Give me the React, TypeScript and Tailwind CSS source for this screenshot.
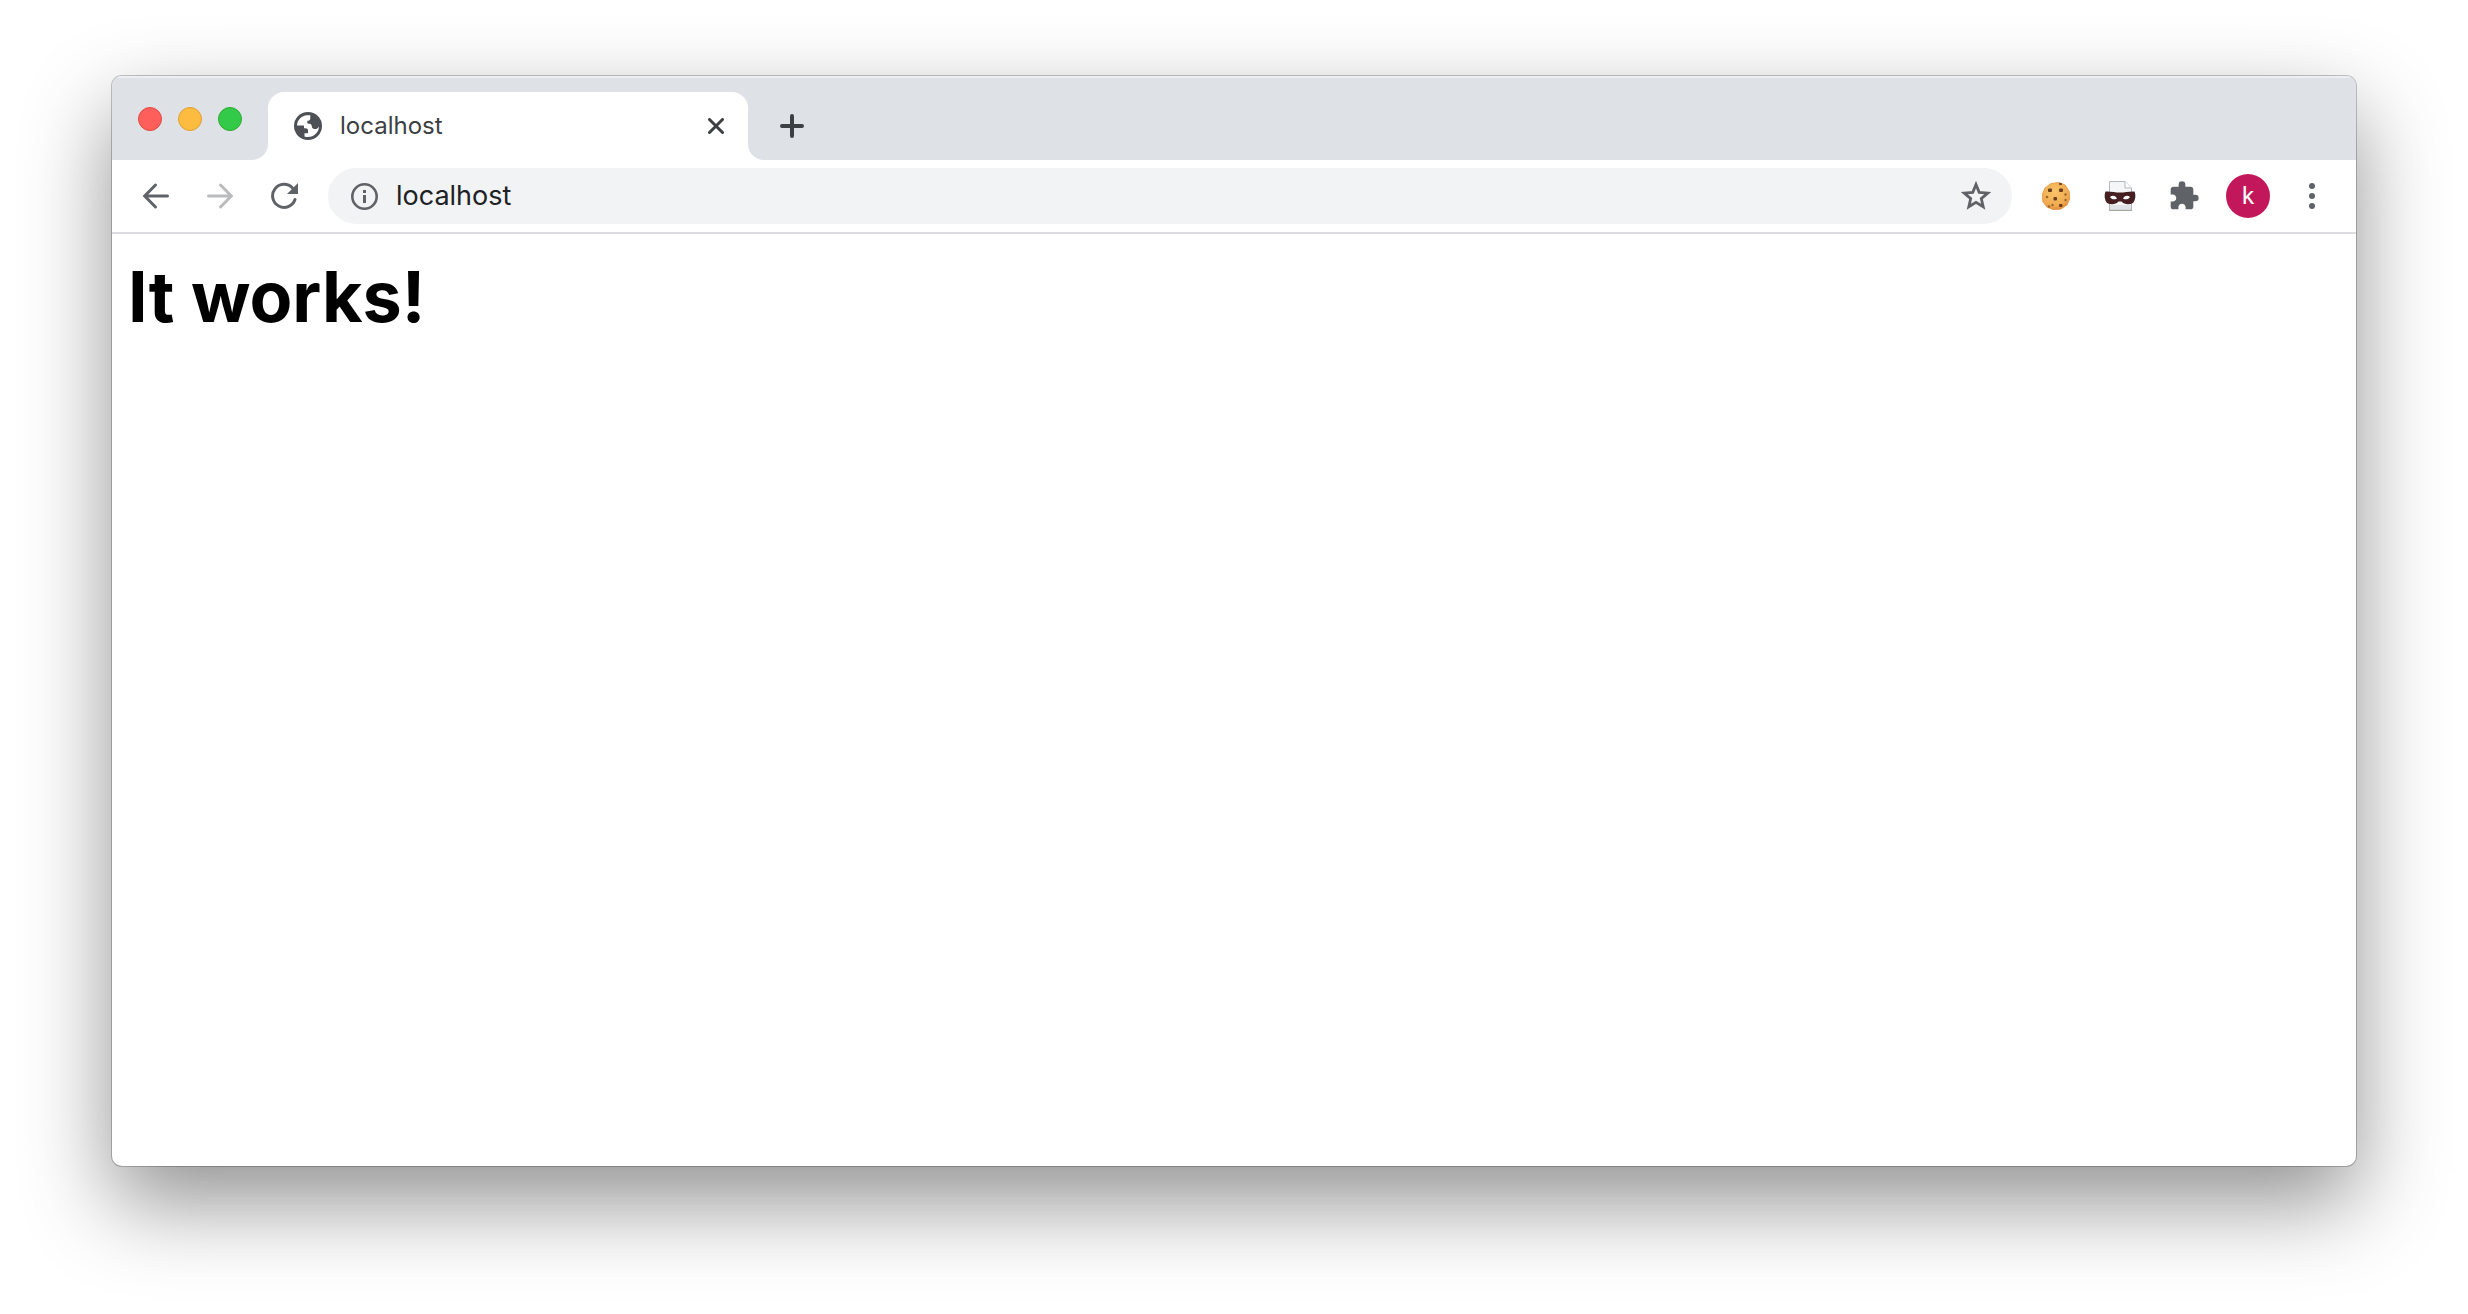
import type { ReactNode } from "react";
import { MdExtension } from "react-icons/md";

interface IconButtonProps {
  label: string;
  children: ReactNode;
}

function IconButton({ label, children }: IconButtonProps) {
  return (
    <button
      type="button"
      aria-label={label}
      className="flex h-14 w-14 shrink-0 items-center justify-center rounded-full text-[#5f6368]"
    >
      {children}
    </button>
  );
}

function GlobeIcon() {
  return (
    <svg viewBox="0 0 28 28" className="h-7 w-7 shrink-0" aria-hidden="true">
      <circle cx="14" cy="14" r="14" fill="#4d5156" />
      <path
        d="M3 13.5C3.200 8.500 7 4 12.300 3.300H16.300V6.500C16.300 8 15 8.800 13.300 8.800V10.800C13.300 11.500 14.500 11.800 15.500 11.800C17.200 11.800 17.800 13 18 15.500C19.500 17.500 22.500 17.500 24.300 15.500L25 14.500C25 20 20 25 14 25C12.500 25 11.500 24.700 10.500 24.400V21.300H14V18.500C14 17.200 13 16.300 11.500 16.300H10V13.500Z"
        fill="#fff"
      />
    </svg>
  );
}

function ArrowIcon({ className }: { className: string }) {
  return (
    <svg
      viewBox="0 0 28 28"
      className={className}
      fill="none"
      stroke="currentColor"
      strokeWidth="3"
      strokeLinecap="round"
      strokeLinejoin="miter"
      aria-hidden="true"
    >
      <path d="M25.500 14H3.500M13.500 3L2.700 14L13.500 25" />
    </svg>
  );
}

function ReloadIcon() {
  return (
    <svg viewBox="0 0 28 28" className="h-7 w-7" fill="none" aria-hidden="true">
      <path
        d="M25 17.500A11.500 11.500 0 1 1 22.500 6"
        stroke="currentColor"
        strokeWidth="3"
        strokeLinecap="round"
      />
      <path d="M28 1V12H17Z" fill="currentColor" />
    </svg>
  );
}

function InfoIcon() {
  return (
    <svg viewBox="0 0 32 32" className="h-8 w-8 shrink-0" aria-hidden="true">
      <circle cx="16.500" cy="16.500" r="12.200" fill="none" stroke="currentColor" strokeWidth="2.600" />
      <path d="M15 10H18V13H15ZM15 15H18V23H15Z" fill="currentColor" />
    </svg>
  );
}

function StarIcon() {
  return (
    <svg viewBox="0 0 36 36" className="h-9 w-9" aria-hidden="true">
      <path
        d="M18 6.500L21.200 14.300L29.800 15L23.300 20.600L25.200 28.800L18 24.400L10.800 28.800L12.700 20.600L6.200 15L14.800 14.300Z"
        fill="none"
        stroke="currentColor"
        strokeWidth="2.800"
      />
    </svg>
  );
}

function CookieIcon() {
  return (
    <svg viewBox="0 0 28 28" className="h-7 w-7" aria-hidden="true">
      <defs>
        <radialGradient id="cookie" cx="0.45" cy="0.35" r="0.7">
          <stop offset="0" stopColor="#f9c46a" />
          <stop offset="0.7" stopColor="#f0ab50" />
          <stop offset="1" stopColor="#e07c35" />
        </radialGradient>
      </defs>
      <path
        d="M9 1.500L17 .5L23 3L27 9L28 16L25 23L19 27L12 28L5 25L1 20L0 13L3 6Z"
        fill="url(#cookie)"
        stroke="#e9a050"
        strokeLinejoin="round"
      />
      <g fill="#6b3f1b">
        <rect x="6" y="6.500" width="4" height="3.500" rx="1" />
        <rect x="17" y="6.500" width="4" height="3.500" rx="1" />
        <rect x="11.500" y="15" width="3.500" height="3.500" rx="1" />
        <rect x="17" y="22" width="3.500" height="3" rx="1" />
        <rect x="17" y="1" width="3" height="2" rx="1" />
      </g>
      <g fill="#9c6529">
        <circle cx="23.500" cy="12.500" r="1.200" />
        <circle cx="5" cy="15" r="1.300" />
        <circle cx="10.500" cy="23" r="1.200" />
        <circle cx="23.500" cy="18" r="1.200" />
        <circle cx="7" cy="24.500" r="1.200" />
      </g>
    </svg>
  );
}

function MaskIcon() {
  return (
    <svg viewBox="0 0 32 32" className="h-8 w-8" aria-hidden="true">
      <path d="M5.500 1.500H21L27.500 8V30H5.500Z" fill="#f4f6f8" stroke="#b4b8bc" />
      <path d="M21 1.500V8H27.500" fill="#fff" stroke="#b4b8bc" />
      <path d="M6 25H27V29H6Z" fill="#dfe3e8" />
      <path d="M5 30.500H28" stroke="#a3a99c" />
      <path
        d="M1.500 11.500C6 11 11 12.500 16 12.500S26 11 30.500 11.500C32 15 31.500 20 29 23C25 25 20 24.500 17.500 21.500H14.500C12 24.500 7 25 3 23C.5 20 0 15 1.500 11.500Z"
        fill="#451f22"
      />
      <path d="M6 17C8 15.300 11 15.300 13 18.500C10.500 20 7.500 19.500 6 17ZM26 17C24 15.300 21 15.300 19 18.500C21.500 20 24.500 19.500 26 17Z" fill="#fff" />
    </svg>
  );
}

function TabStrip() {
  return (
    <div className="flex h-[84px] items-end border-t-2 border-[#eceff2] bg-[#dee1e6]">
      <div className="flex h-[82px] w-[156px] shrink-0 items-center gap-4 pl-[26px]">
        <button type="button" aria-label="Close window" className="h-6 w-6 rounded-full border border-[#e24b41] bg-[#fe5f5b]" />
        <button type="button" aria-label="Minimize window" className="h-6 w-6 rounded-full border border-[#e1a032] bg-[#fdbc40]" />
        <button type="button" aria-label="Zoom window" className="h-6 w-6 rounded-full border border-[#2dac2f] bg-[#34ca49]" />
      </div>
      <div className="relative flex h-[68px] w-[480px] items-center rounded-t-2xl bg-white pr-6 pl-[26px]">
        {/* Flared feet where the tab meets the toolbar */}
        <svg viewBox="0 0 16 16" className="absolute bottom-0 -left-4 h-4 w-4" aria-hidden="true">
          <path d="M0 16A16 16 0 0 0 16 0V16Z" fill="#fff" />
        </svg>
        <svg viewBox="0 0 16 16" className="absolute -right-4 bottom-0 h-4 w-4" aria-hidden="true">
          <path d="M16 16A16 16 0 0 1 0 0V16Z" fill="#fff" />
        </svg>
        <GlobeIcon />
        <span className="ml-[18px] flex-1 truncate text-2xl text-[#3c4043]">localhost</span>
        <button type="button" aria-label="Close tab" className="text-[#3c4043]">
          <svg viewBox="0 0 16 16" className="h-4 w-4" fill="none" stroke="currentColor" strokeWidth="3" strokeLinecap="round">
            <path d="M1.500 1.500L14.500 14.500M14.500 1.500L1.500 14.500" />
          </svg>
        </button>
      </div>
      <button type="button" aria-label="New tab" className="ml-8 flex h-[68px] items-center text-[#3c4043]">
        <svg viewBox="0 0 24 24" className="h-6 w-6" fill="none" stroke="currentColor" strokeWidth="4" strokeLinecap="round">
          <path d="M12 2V22M2 12H22" />
        </svg>
      </button>
    </div>
  );
}

function Toolbar() {
  return (
    <div className="flex items-center gap-2 border-b-2 border-[#dadce0] bg-white px-4 py-2">
      <IconButton label="Back">
        <ArrowIcon className="h-7 w-7" />
      </IconButton>
      <IconButton label="Forward">
        <ArrowIcon className="h-7 w-7 rotate-180 text-[#babcbe]" />
      </IconButton>
      <IconButton label="Reload">
        <ReloadIcon />
      </IconButton>
      <div className="mx-2 flex h-14 flex-1 items-center rounded-full bg-[#f1f3f4] pr-[18px] pl-5 text-[#5f6368]">
        <InfoIcon />
        <input
          type="text"
          aria-label="Address"
          defaultValue="localhost"
          className="ml-4 min-w-0 flex-1 bg-transparent text-[27px] text-[#202124] outline-none"
        />
        <button type="button" aria-label="Bookmark this tab">
          <StarIcon />
        </button>
      </div>
      <IconButton label="Cookies">
        <CookieIcon />
      </IconButton>
      <IconButton label="Mask">
        <MaskIcon />
      </IconButton>
      <IconButton label="Extensions">
        <MdExtension className="h-8 w-8" />
      </IconButton>
      <IconButton label="Profile">
        <span className="flex h-11 w-11 items-center justify-center rounded-full bg-[#c2185b] font-[Roboto,sans-serif] text-2xl text-white">
          k
        </span>
      </IconButton>
      <IconButton label="Menu">
        <svg viewBox="0 0 28 28" className="h-7 w-7" fill="currentColor" aria-hidden="true">
          <circle cx="14" cy="4" r="3" />
          <circle cx="14" cy="14" r="3" />
          <circle cx="14" cy="24" r="3" />
        </svg>
      </IconButton>
    </div>
  );
}

export default function App() {
  return (
    <div className="flex min-h-screen bg-white px-28 pt-[76px] pb-[148px] font-[Inter,sans-serif]">
      <div className="flex flex-1 flex-col overflow-hidden rounded-[10px] bg-white shadow-[0_0_0_1px_rgba(0,0,0,0.22),0_36px_88px_rgba(0,0,0,0.44)]">
        <TabStrip />
        <Toolbar />
        <main className="flex-1 px-4 py-6">
          <h1 className="text-[70px] leading-[78px] font-bold text-black">It works!</h1>
        </main>
      </div>
    </div>
  );
}
